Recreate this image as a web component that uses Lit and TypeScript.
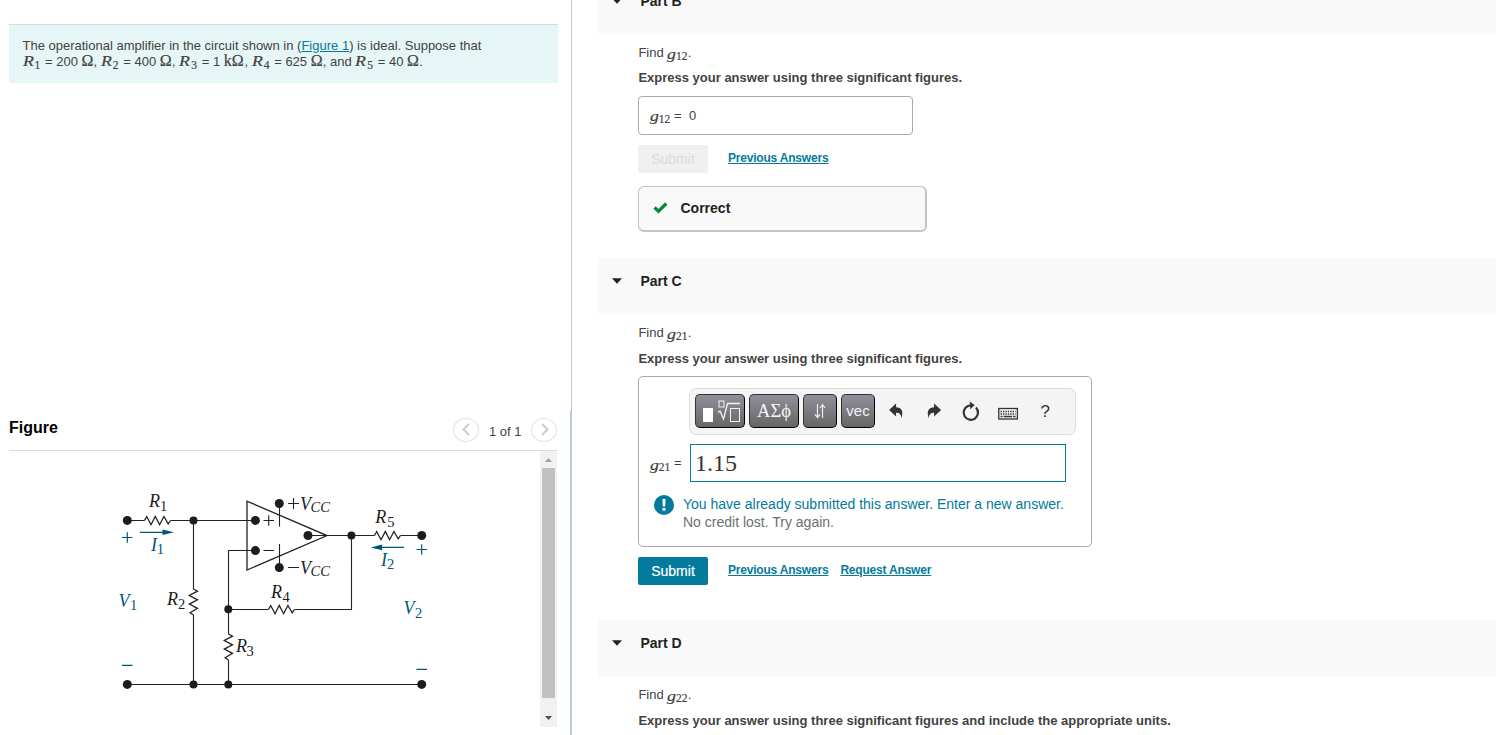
import { LitElement, css, html, svg, nothing } from 'lit';
import { customElement, property } from 'lit/decorators.js';

@customElement("math-var")
export class MathVar extends LitElement {

    @property({ type: String })
    public name: string = "";

    @property({ type: String })
    public sub: string = "";

    static styles = css`

    :host {
        display: inline-block;
        line-height: 0;
        white-space: nowrap;
        font-family: "Liberation Serif", serif;
        font-weight: normal;
        text-align: left;
    }

    .name {
        display: inline-block;
        font-size: 15.5px;
        font-style: italic;
        transform: scaleX( 1.15 );
        transform-origin: left;
        margin-right: 2.5px;
        -webkit-text-stroke: .2px currentColor;
    }

    .name.g {
        vertical-align: -1.5px;
        margin-right: 1px;
    }

    .sub {
        font-size: 11.5px;
        vertical-align: -2.5px;
        -webkit-text-stroke: .2px currentColor;
    }

    `;

    render() {
        return html`<span class="name ${this.name}">${this.name}</span><span class="sub">${this.sub}</span>`;
    }

}

@customElement("circuit-figure")
export class CircuitFigure extends LitElement {

    static styles = css`

    :host {
        display: block;
    }

    svg {
        display: block;
    }

    .wire {
        fill: none;
        stroke: #222;
        stroke-width: 1.1;
    }

    .part {
        fill: none;
        stroke: #222;
        stroke-width: 1.3;
    }

    .dot {
        fill: #1c1c1c;
    }

    text {
        font-family: "Liberation Serif", serif;
        font-size: 18px;
        fill: #1c1c1c;
    }

    .it {
        font-style: italic;
    }

    .sub {
        font-size: 14.5px;
    }

    text.port, .port {
        fill: #00557a;
    }

    .port-line {
        fill: none;
        stroke: #00557a;
        stroke-width: 1.2;
    }

    `;

    // Zigzag that starts at x, y and runs 26 units to the right
    private resistor( x: number, y: number, vertical = false ) {
        const turn = vertical ? `rotate(90 ${x} ${y})` : nothing;
        return svg`<path class="part" transform=${turn}
            d="M${x} ${y} l2.2 -4 l4.3 8.2 l4.3 -8.2 l4.3 8.2 l4.3 -8.2 l4.3 7.4 l2.3 -3.4" />`;
    }

    private label( x: number, y: number, name: string, sub: string, dx: number, dy: number, port = false ) {
        const color = port ? "port" : "";
        return svg`
            <text class="it ${color}" x=${x} y=${y}>${name}</text>
            <text class="sub ${color}" x=${x + dx} y=${y + dy}>${sub}</text>`;
    }

    render() {

        const dots = [
            [127.3, 520.4, 4.5], [193.5, 520.4, 4], [255.4, 520.4, 4.5],
            [255.4, 550.6, 4.5], [279.3, 503.5, 4.5], [279.3, 567.6, 4.5],
            [308, 535.5, 4.5], [351.4, 535.5, 4], [421.7, 535.5, 4.5],
            [228.3, 609.3, 4], [127.3, 684.4, 4.5], [193.5, 684.4, 4],
            [228.3, 684.4, 4], [421.7, 684.4, 4.5]
        ];

        return html`
            <svg width="531" height="276" viewBox="9 451 531 276">
                <path class="wire" d="M127 520.5H144.5 M170.5 520.5H255 M193.5 520.5V589 M193.5 615V684.5 M127 684.5H421.5
                    M255 550.5H228.5V634 M228.5 660V684.5 M228.5 609.5H268.5 M294.5 609.5H351.5V535.5
                    M308 535.5H374.5 M400.5 535.5H421.5 M279.5 503.5V526.5 M279.5 544V567.5" />
                <path class="part" d="M247 501.2V570L327 535.6Z" />
                ${this.resistor( 144.5, 520.5 )}
                ${this.resistor( 193.5, 589, true )}
                ${this.resistor( 228.5, 634, true )}
                ${this.resistor( 268.5, 609.5 )}
                ${this.resistor( 374.5, 535.5 )}
                ${dots.map( ( [x, y, r] ) => svg`<circle class="dot" cx=${x} cy=${y} r=${r} />` )}

                <path class="wire" d="M263.5 520.5H274 M268.7 515.3V525.7 M263.5 550.5H274" />
                <path class="wire" d="M288 503.5H299 M293.5 498V509 M288 567.5H299" />
                <path class="port-line" d="M122 537.5H132.5 M127.3 532.3V542.7 M122 665.4H132.5
                    M416.5 549.5H427 M421.7 544.3V554.7 M416.5 669.4H427 M140 532.3H165 M404 547.4H380" />
                <path class="port" d="M174 532.3L162.5 529.5V535.1Z M370.8 547.4L382 544.6V550.2Z" />

                ${this.label( 149, 507, "R", "1", 11, 4 )}
                ${this.label( 167, 605, "R", "2", 11, 3.5 )}
                ${this.label( 236, 652, "R", "3", 10.5, 3.5 )}
                ${this.label( 271, 598, "R", "4", 11.5, 3.5 )}
                ${this.label( 375.3, 523, "R", "5", 12, 3.5 )}
                ${this.label( 151, 551, "I", "1", 5.8, 3, true )}
                ${this.label( 381, 565.5, "I", "2", 6, 3.5, true )}
                ${this.label( 118.5, 607, "V", "1", 11.5, 3, true )}
                ${this.label( 403.5, 614, "V", "2", 11.5, 4, true )}
                <text class="it" x="300" y="509.5">V</text>
                <text class="it sub" x="310.5" y="511.5">CC</text>
                <text class="it" x="300" y="573.5">V</text>
                <text class="it sub" x="310.5" y="575.5">CC</text>
            </svg>
        `;

    }

}

@customElement("problem-part")
export class ProblemPart extends LitElement {

    @property({ type: String })
    public label: string = "";

    @property({ type: String })
    public index: string = "";

    @property({ type: String })
    public instruction: string = "";

    static styles = css`

    :host {
        display: block;
    }

    header {
        height: var( --header-height, 56px );
        padding: 15px 0 0 14px;
        box-sizing: border-box;
        background: #f9f9f9;
        display: flex;
        gap: 18.4px;
        color: #222;
        font-size: 14px;
        line-height: 16px;
        font-weight: bold;
    }

    header svg {
        margin-top: 5px;
    }

    .body {
        display: flow-root;
        padding-left: 40px;
    }

    p {
        margin: var( --body-top, 11px ) 0 var( --text-gap, 10px );
        padding-left: .4px;
        line-height: 16px;
        height: 16px;
        white-space: nowrap;
    }

    p + p {
        margin: 0;
        height: calc( 36px - var( --text-gap, 10px ) );
    }

    math-var {
        width: 20.5px;
    }

    `;

    render() {
        return html`
            <header>
                <svg width="10" height="6" viewBox="0 0 10 6"><path d="M0 .3H10L5 5.8Z" fill="#222" /></svg>
                <span>${this.label}</span>
            </header>
            <div class="body">
                <p>Find <math-var name="g" sub=${this.index}></math-var>.</p>
                <p><b>${this.instruction}</b></p>
                <slot></slot>
            </div>
        `;
    }

}

@customElement("app-root")
export class AppRoot extends LitElement {

    static styles = css`

    :host {
        display: grid;
        grid-template-columns: 572px 1fr;
        height: 735px;
        overflow: hidden;
        background: white;
        color: #424242;
        font-family: "Liberation Sans", Arial, sans-serif;
        font-size: 13px;
    }

    a {
        color: #047a9c;
        text-decoration: underline;
    }

    .left {
        display: flex;
        flex-direction: column;
        box-sizing: border-box;
        height: 735px;
        padding-top: 24px;
        border-right: 1px solid #bccbdc;
    }

    .intro {
        box-sizing: border-box;
        width: 549px;
        height: 59px;
        margin-left: 9px;
        padding: 13px 13px 0 13.5px;
        border-top: 1px solid #d9dcdc;
        background: #e6f6f6;
        line-height: 16px;
        white-space: nowrap;
    }

    .intro math-var {
        width: 18.9px;
    }

    .line {
        height: 16px;
    }

    .unit {
        display: inline-block;
        width: 12.1px;
        line-height: 0;
        font-family: "Liberation Serif", serif;
        font-size: 16px;
        -webkit-text-stroke: .2px currentColor;
    }

    .unit.kilo {
        width: 20.7px;
    }

    .figure {
        box-sizing: border-box;
        height: 324px;
        margin-top: auto;
        padding: 0 13px 8px 9px;
        border-right: 1px solid #bccbdc;
    }

    .figure-head {
        display: flex;
        align-items: center;
        box-sizing: border-box;
        height: 40px;
        border-bottom: 1px solid #d9dcdc;
    }

    .figure-head h2 {
        flex: 1;
        margin: 0 0 5px;
        font-size: 16px;
        line-height: 20px;
        color: #000;
    }

    .pager {
        display: flex;
        align-items: center;
        gap: 10px;
        margin-bottom: 2px;
    }

    .pager button {
        display: grid;
        place-items: center;
        width: 26px;
        height: 24px;
        padding: 0;
        border: 1px solid #e2e2e2;
        border-radius: 50%;
        background: white;
    }

    .pager span {
        width: 32px;
        padding-top: 4px;
        white-space: nowrap;
    }

    .figure-body {
        display: flex;
        height: 276px;
    }

    .scrollbar {
        display: flex;
        flex-direction: column;
        align-items: center;
        width: 17px;
        background: #f1f1f1;
    }

    .thumb {
        width: 13px;
        height: 230px;
        background: #c1c1c1;
    }

    .scrollbar svg {
        display: block;
    }

    .right {
        margin: -22px 0 0 26px;
    }

    .part-b {
        --text-gap: 9px;
        height: 280px;
    }

    .part-c {
        height: 362px;
    }

    .part-d {
        --header-height: 57px;
        --body-top: 10px;
    }

    .answer {
        display: flex;
        align-items: center;
        box-sizing: border-box;
        width: 275px;
        height: 39px;
        margin-top: -1px;
        padding-left: 11px;
        border: 1px solid #a9a9a9;
        border-radius: 4px;
    }

    .answer math-var {
        width: 24px;
        margin-top: 3px;
    }

    .answer .eq {
        width: 15px;
    }

    .actions {
        display: flex;
        align-items: flex-start;
        margin-top: 10px;
        font-size: 12px;
        font-weight: bold;
        letter-spacing: -.2px;
    }

    .actions a {
        margin-right: 12px;
        line-height: 27px;
    }

    .submit {
        width: 70px;
        height: 28px;
        margin-right: 20px;
        padding: 0;
        border: 0;
        border-radius: 2px;
        background: #047a9c;
        color: white;
        font: 14px "Liberation Sans", Arial, sans-serif;
        -webkit-text-stroke: .2px currentColor;
    }

    .submit:disabled {
        background: #f0f0f0;
        color: #dedede;
    }

    .correct {
        display: flex;
        align-items: center;
        gap: 12.5px;
        box-sizing: border-box;
        width: 289px;
        height: 46px;
        margin-top: 13px;
        padding: 0 0 1px 14px;
        border: 1px solid #c4c4c4;
        border-right-width: 2px;
        border-bottom-width: 2px;
        border-radius: 6px;
        background: #f9f9f9;
        color: #222;
        font-size: 14px;
        font-weight: bold;
    }

    .editor {
        display: flex;
        flex-direction: column;
        box-sizing: border-box;
        width: 454px;
        height: 171px;
        margin-top: -1px;
        padding: 11px 15px 0 11px;
        border: 1px solid #a9a9a9;
        border-radius: 5px;
    }

    .toolbar {
        display: flex;
        align-items: center;
        gap: 4px;
        box-sizing: border-box;
        height: 47px;
        margin-left: 39px;
        padding: 0 0 1px 5px;
        border: 1px solid #dcdcdc;
        border-radius: 7px;
        background: #f4f4f4;
    }

    .key {
        display: grid;
        place-items: center;
        box-sizing: border-box;
        width: 50px;
        height: 34px;
        padding: 0;
        border: 1px solid #333;
        border-right-color: #000;
        border-bottom-color: #000;
        border-radius: 5px;
        background: linear-gradient( #918f9b, #666 );
        color: #f4f4f4;
        font: 15px "Liberation Sans", Arial, sans-serif;
    }

    .key.small {
        width: 34px;
    }

    .key.vec {
        padding-bottom: 2px;
    }

    .key.greek {
        font: 18.5px "Liberation Serif", serif;
    }

    .tools {
        display: flex;
        align-items: center;
        margin: 1px 0 0 -1px;
        color: #333;
    }

    .tools svg, .tools span {
        width: 37.2px;
        text-align: center;
        font-size: 17px;
    }

    .entry {
        display: flex;
        align-items: center;
        height: 38px;
        margin-top: 9px;
    }

    .entry math-var {
        width: 24px;
        margin-top: 5px;
    }

    .entry .eq {
        width: 16px;
        margin-top: -2px;
    }

    .field {
        box-sizing: border-box;
        width: 376px;
        height: 38px;
        padding-left: 4px;
        border: 1px solid #047a9c;
        color: #333;
        font: 24px/36px "Liberation Serif", serif;
    }

    .message {
        display: flex;
        gap: 9px;
        margin: 13px 0 0 4px;
        color: #6a7070;
        font-size: 14px;
        line-height: 18px;
        white-space: nowrap;
    }

    .message strong {
        display: block;
        color: #047a9c;
        font-weight: normal;
    }

    `;

    private arrow( d: string ) {
        return html`<svg width="17" height="17" viewBox="0 0 17 17"><path d=${d} fill="none" stroke="#ccc" stroke-width="2" /></svg>`;
    }

    private renderIntro() {
        const ohm = html`<span class="unit">Ω</span>`;
        const kohm = html`<span class="unit kilo">kΩ</span>`;
        const r = ( n: string ) => html`<math-var name="R" sub=${n}></math-var>`;
        return html`
            <div class="intro">
                <div class="line">The operational amplifier in the circuit shown in (<a>Figure 1</a>) is ideal. Suppose that</div>
                <div class="line">${r( "1" )} = 200 ${ohm}, ${r( "2" )} = 400 ${ohm}, ${r( "3" )} = 1 ${kohm}, ${r( "4" )} = 625 ${ohm}, and ${r( "5" )} = 40 ${ohm}.</div>
            </div>
        `;
    }

    private renderFigure() {
        return html`
            <section class="figure">
                <div class="figure-head">
                    <h2>Figure</h2>
                    <div class="pager">
                        <button aria-label="Previous">${this.arrow( "M11 3L5.5 8.5L11 14" )}</button>
                        <span>1 of 1</span>
                        <button aria-label="Next">${this.arrow( "M6 3L11.5 8.5L6 14" )}</button>
                    </div>
                </div>
                <div class="figure-body">
                    <circuit-figure></circuit-figure>
                    <div class="scrollbar">
                        <svg width="17" height="17" viewBox="0 0 17 17"><path d="M5 11L8.5 7L12 11Z" fill="#a3a3a3" /></svg>
                        <div class="thumb"></div>
                        <svg width="17" height="29" viewBox="0 0 17 29"><path d="M5 18L8.5 22L12 18Z" fill="#505050" /></svg>
                    </div>
                </div>
            </section>
        `;
    }

    private renderToolbar() {
        return html`
            <div class="toolbar">
                <button class="key" aria-label="Templates">
                    <svg width="40" height="24" viewBox="0 0 40 24" fill="none" stroke="#f4f4f4">
                        <rect x="3" y="9" width="10" height="14" fill="#fff" stroke="none" />
                        <rect x="19" y="2" width="5" height="6" />
                        <path d="M18 13.5L20 12L23.5 20L27.5 4.5H40" stroke-width="1.3" />
                        <rect x="30.5" y="9.5" width="9" height="13" />
                    </svg>
                </button>
                <button class="key greek">ΑΣϕ</button>
                <button class="key small" aria-label="Arrows">
                    <svg width="14" height="18" viewBox="0 0 14 18" fill="none" stroke="#eee" stroke-width="1.2">
                        <path d="M4.5 2V15.5 M2 12.5L4.5 15.5L7 12.5 M9.5 16V2.5 M7 6L9.5 2.5L12 6" />
                    </svg>
                </button>
                <button class="key small vec">vec</button>
                <div class="tools">
                    <svg height="20" viewBox="0 0 37 20" fill="currentColor">
                        <path d="M11 8L18 1.5V5.3C23 5.3 26 8.5 23.2 16.8C23.4 12.5 21.5 10.8 18 10.8V14.5Z" />
                    </svg>
                    <svg height="20" viewBox="0 0 37 20" fill="currentColor">
                        <path d="M26 8L19 1.5V5.3C14 5.3 11 8.5 13.8 16.8C13.6 12.5 15.5 10.8 19 10.8V14.5Z" />
                    </svg>
                    <svg height="22" viewBox="0 0 37 22" fill="none" stroke="currentColor" stroke-width="2.2">
                        <path d="M23.8 6.5A7.2 7.2 0 1 1 15.9 5L19 4.2" />
                        <path d="M17.5 .5L22.5 4L18.3 8.2Z" fill="currentColor" stroke="none" />
                    </svg>
                    <svg height="20" viewBox="0 0 37 20" fill="none" stroke="currentColor">
                        <rect x="8.7" y="6.5" width="18.6" height="10.5" stroke-width="1.3" />
                        <path d="M10.5 9.5H25.5" stroke-dasharray="1.4 1" stroke-width="1.5" />
                        <path d="M10.5 12H25.5" stroke-dasharray="1.4 1" stroke-width="1.5" />
                        <path d="M10.5 14.6H12.5 M13.5 14.6H22 M23 14.6H25.5" stroke-width="1.5" />
                    </svg>
                    <span>?</span>
                </div>
            </div>
        `;
    }

    render() {

        const figures = "Express your answer using three significant figures";

        return html`
            <div class="left">
                ${this.renderIntro()}
                ${this.renderFigure()}
            </div>
            <div class="right">
                <problem-part class="part-b" label="Part B" index="12" instruction="${figures}.">
                    <div class="answer">
                        <math-var name="g" sub="12"></math-var><span class="eq">=</span><span>0</span>
                    </div>
                    <div class="actions">
                        <button class="submit" disabled>Submit</button>
                        <a>Previous Answers</a>
                    </div>
                    <div class="correct">
                        <svg width="15" height="12" viewBox="0 0 15 12"><path d="M1.5 5.5L5.5 9.2L13.3 1.5" fill="none" stroke="#078840" stroke-width="3.2" /></svg>
                        <span>Correct</span>
                    </div>
                </problem-part>
                <problem-part class="part-c" label="Part C" index="21" instruction="${figures}.">
                    <div class="editor">
                        ${this.renderToolbar()}
                        <div class="entry">
                            <math-var name="g" sub="21"></math-var><span class="eq">=</span>
                            <div class="field">1.15</div>
                        </div>
                        <div class="message">
                            <svg width="20" height="20" viewBox="0 0 20 20">
                                <circle cx="10" cy="10" r="10" fill="#047a9c" />
                                <path d="M8.4 4H11.6L11.2 11.4H8.8Z M8.5 13H11.5V15.8H8.5Z" fill="#fff" />
                            </svg>
                            <div><strong>You have already submitted this answer. Enter a new answer.</strong>No credit lost. Try again.</div>
                        </div>
                    </div>
                    <div class="actions">
                        <button class="submit">Submit</button>
                        <a>Previous Answers</a>
                        <a>Request Answer</a>
                    </div>
                </problem-part>
                <problem-part class="part-d" label="Part D" index="22" instruction="${figures} and include the appropriate units."></problem-part>
            </div>
        `;

    }

}
